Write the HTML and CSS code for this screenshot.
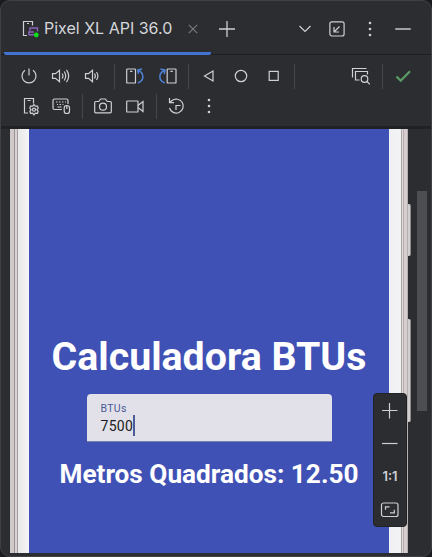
FILE: index.html
```html
<!DOCTYPE html>
<html lang="pt">
<head>
<meta charset="utf-8">
<title>Pixel XL API 36.0</title>
<link rel="stylesheet" href="styles.css">
</head>
<body>
<main class="window">
  <header class="tabs">
    <div class="tab">
      <svg class="device" viewBox="0 0 18 18"><path d="M5 15.5H1.500v-14h9v4"/><path d="M5 3.500h2"/><path class="purple" d="M8 11V8h7.500v3.500M6 12h6M7 12v2.800h5"/><circle class="online" cx="14.300" cy="15" r="2.400"/></svg>
      <span class="tab-title">Pixel XL API 36.0</span>
      <svg class="close" viewBox="0 0 10 10"><path d="M.8.8l8.400 8.400M9.200.8L.8 9.200"/></svg>
    </div>
    <svg class="add" viewBox="0 0 18 18"><path d="M9 1v16M1 9h16"/></svg>
    <div class="window-actions">
      <svg viewBox="0 0 20 20"><path d="M4.500 7l5.500 5.500L15.500 7"/></svg>
      <svg viewBox="0 0 20 20"><rect x="2.900" y="2.800" width="14.200" height="14.200" rx="2"/><path d="M12.500 7.500l-5 5M7 8v5h5"/></svg>
      <svg viewBox="0 0 20 20"><g class="dots"><circle cx="10" cy="4" r="1.300"/><circle cx="10" cy="10" r="1.300"/><circle cx="10" cy="16" r="1.300"/></g></svg>
      <svg viewBox="0 0 20 20"><path class="minimize" d="M2.200 10h15.600"/></svg>
    </div>
  </header>

  <section class="toolbar">
    <div class="tools">
      <svg viewBox="0 0 20 20"><path d="M10 2.500v7M6 4.200a7 7 0 1 0 8 0"/></svg>
      <svg viewBox="0 0 20 20"><path d="M1.500 7.700h3l4-3.400v11.400l-4-3.400h-3zM11 7.500q2 2.500 0 5M13.200 5.500q3 4.500 0 9M15.500 3.800q4.400 6.200 0 12.400"/></svg>
      <svg viewBox="0 0 20 20"><path d="M2.500 7.700h3l4-3.400v11.400l-4-3.400h-3zM11.500 7.500q1.700 2.500 0 5M13.500 6q2.800 4 0 8"/></svg>
      <i class="rule"></i>
      <svg viewBox="0 0 20 20"><rect x="1.700" y="3" width="8.800" height="14" rx=".6"/><path d="M5 5.300h2.400"/><path class="blue" d="M13 17c7-3 6-10 0-12.700M17 3l-4.300 1 .8 4"/></svg>
      <svg viewBox="0 0 20 20"><rect x="10.200" y="3" width="8.800" height="14" rx=".6"/><path d="M13.400 5.300h2.400"/><path class="blue" d="M7.700 17c-7-3-6-10 0-12.700M3.500 3L8 4l-.8 4"/></svg>
      <i class="rule"></i>
      <svg viewBox="0 0 20 20"><path d="M14 5v10l-8.500-5z"/></svg>
      <svg viewBox="0 0 20 20"><circle cx="10" cy="10" r="5.700"/></svg>
      <svg viewBox="0 0 20 20"><rect x="6.200" y="5.400" width="9" height="9"/></svg>
      <i class="rule"></i>
      <div class="tools-end">
        <svg viewBox="0 0 20 20"><path d="M1.500 11.500v-9h14M8.500 14H4.500V5.500h12V8.500"/><circle cx="13.500" cy="13" r="3.300"/><path d="M16 15.500l2.800 2.800"/></svg>
        <i class="rule"></i>
        <svg viewBox="0 0 20 20"><path class="check" d="M3.500 10.500l4.200 4.200L17 5.300"/></svg>
      </div>
    </div>
    <div class="tools">
      <svg viewBox="0 0 20 20"><path d="M9 17H5.500V2.500h9v5M8.500 4.500h3"/><path d="M15 8.500l1.300 1.700 2.200-.1.700 2-1.300 1.600 1.300 1.600-.7 2-2.200-.1-1.300 1.700-1.300-1.700-2.200.1-.7-2 1.300-1.600-1.300-1.600.7-2 2.200.1z"/><circle cx="15" cy="13.700" r="1.500"/></svg>
      <svg viewBox="0 0 20 20"><path d="M11 13.500H3.500q-1.500 0-1.500-1.500V4.500q0-1.500 1.500-1.500h12q1.500 0 1.500 1.500V8"/><path d="M5 6h1.500m1.500 0h1.500m1.500 0h1.500m1.500 0h1M6 8.500h1m1.500 0h1.500m1.500 0h1M6.500 11h4"/><rect x="13.200" y="9.500" width="5.300" height="8" rx="2.600"/><path d="M15.800 10v3"/></svg>
      <i class="rule"></i>
      <svg viewBox="0 0 20 20"><path d="M1.700 6.500q0-1 1-1h3l2-2.500h4.600l2 2.500h3q1 0 1 1v9.300q0 1-1 1H2.700q-1 0-1-1z"/><circle cx="10" cy="10.700" r="3.500"/></svg>
      <svg viewBox="0 0 20 20"><rect x="1.700" y="5" width="11.300" height="11" rx=".6"/><path d="M13 9.500l5-4v10l-5-4"/></svg>
      <i class="rule"></i>
      <svg viewBox="0 0 20 20"><path d="M2.500 12A7 7 0 1 0 5 4.500L2.500 6.500M2.500 2v4.700H7M9 14V9.500h4.500"/></svg>
      <svg viewBox="0 0 20 20"><g class="dots"><circle cx="10" cy="4" r="1.300"/><circle cx="10" cy="10" r="1.300"/><circle cx="10" cy="16" r="1.300"/></g></svg>
    </div>
  </section>

  <section class="viewport">
    <div class="edge-left"></div>
    <div class="screen">
      <h1>Calculadora BTUs</h1>
      <div class="field">
        <span class="label">BTUs</span>
        <span class="value">7500<i class="caret"></i></span>
      </div>
      <h2>Metros Quadrados: 12.50</h2>
    </div>
    <div class="edge-right"></div>
    <div class="side-buttons"><i class="power-key"></i><i class="volume-key"></i></div>
    <div class="scrollbar"></div>
    <aside class="zoom">
      <svg viewBox="0 0 20 20"><path d="M9.500 2v15.500M2 9.500h15.500"/></svg>
      <svg viewBox="0 0 20 20"><path d="M2 9.500h15.500"/></svg>
      <span>1:1</span>
      <svg viewBox="0 0 20 20"><rect x="1.500" y="3" width="16.500" height="13.500" rx="2"/><path d="M5.500 9.800V6.800H9.500M10 12.800h4.300V9.800"/></svg>
    </aside>
  </section>
</main>
</body>
</html>
```
FILE: styles.css
```css
* { box-sizing: border-box; }
body { margin: 0; background: #1b1c1f; font-family: Inter, "Liberation Sans", sans-serif; }
svg { display: block; flex: none; width: 20px; height: 20px; fill: none; stroke: #ced0d6; stroke-width: 1.2; }
.window {
  width: 432px;
  height: 557px;
  display: flex;
  flex-direction: column;
  overflow: hidden;
  background: #2b2d30;
  border: 1px solid #404144;
  border-radius: 10px;
}
.tabs {
  height: 54px;
  display: flex;
  align-items: center;
  padding-left: 3px;
  border-bottom: 1px solid #1e1f22;
}
.tab {
  width: 207px;
  height: 54px;
  display: flex;
  align-items: center;
  padding: 4px 0 0 17px;
  border-bottom: 3px solid #4272d2;
  border-radius: 0 0 2px 2px;
}
.device { width: 18px; height: 18px; margin: 1px 0 0 1px; }
.purple { stroke: #8c64b8; stroke-width: 1.4; }
.online { fill: #0be01b; stroke: none; }
.tab-title {
  width: 132px;
  margin-left: 4px;
  color: #d5d7dc;
  font-size: 16px;
  white-space: nowrap;
}
.close { width: 10px; height: 10px; margin: 2px 0 0 12px; stroke: #777a80; }
.add { width: 18px; height: 18px; margin: 2px 0 0 7px; stroke-width: 1.3; }
.window-actions { display: flex; gap: 12.8px; margin: 3px 18px 0 auto; }
.minimize { stroke: #9fa1a6; stroke-width: 1.8; }
.dots { fill: #ced0d6; stroke: none; }
.toolbar {
  height: 74px;
  flex: none;
  padding: 6px 12px 0;
  border-bottom: 3px solid #202125;
}
.tools { height: 30px; display: flex; align-items: center; }
.tools svg { margin: 0 6px; }
.rule { width: 1px; height: 25px; margin: 0 4px 0 5px; background: #45474b; }
.tools-end { display: flex; align-items: center; margin-left: auto; }
.blue { stroke: #4d82d8; stroke-width: 1.5; }
.check { stroke: #5b9a65; stroke-width: 2.3; }
.viewport {
  position: relative;
  height: 424px;
  flex: none;
  display: flex;
  padding-left: 9px;
}
.edge-left {
  width: 19px;
  background: linear-gradient(90deg, #cfc9ca 0 4px, #9d9293 4px 5px, #d8d2d3 5px 7px, #a89e9f 7px 8px, #e9e8e9 8px, #f5f5f6 19px);
}
.edge-right {
  width: 19px;
  background: linear-gradient(90deg, #f0f1f5 0, #f3f3f4 12px, #aaa3a4 12px 13px, #e0dadb 13px 14px, #b5adae 14px 15px, #d5cdce 15px 18px, #b5afb0 18px);
}
.screen {
  width: 360px;
  display: flex;
  flex-direction: column;
  align-items: center;
  padding-top: 204px;
  background: #3f51b5;
  color: #fff;
  font-family: Roboto, sans-serif;
}
h1, h2 { margin: 0; font-weight: 700; white-space: nowrap; }
h1 { font-size: 39.3px; line-height: 48px; }
.field {
  width: 245px;
  height: 48px;
  display: flex;
  flex-direction: column;
  margin-top: 13px;
  padding: 8px 14px 0;
  background: #e2e1e9;
  border-bottom: 1px solid #7780af;
  border-radius: 4px 4px 0 0;
}
.label { color: #4b5a97; font-size: 10.5px; line-height: 13px; letter-spacing: .3px; }
.value { display: flex; align-items: center; height: 21px; color: #1b1b20; font-size: 14px; letter-spacing: .3px; }
.caret { width: 2px; height: 21px; background: #4c5c96; }
h2 { margin-top: 17px; font-size: 26.2px; line-height: 30px; }
.side-buttons { width: 4px; padding-top: 75px; }
.side-buttons i { display: block; width: 3px; border-right: 1px solid #8f8b8c; background: #d2cfcf; border-radius: 0 2px 2px 0; }
.power-key { height: 52px; }
.volume-key { height: 103px; margin-top: 63px; }
.scrollbar { width: 10px; height: 220px; margin: 62px 0 0 5px; background: #4d4e51; }
.zoom {
  position: absolute;
  left: 372px;
  top: 264px;
  width: 34px;
  height: 134px;
  display: flex;
  flex-direction: column;
  align-items: center;
  gap: 13px;
  padding-top: 7px;
  background: #2b2d30;
  border: 1px solid #222327;
  border-radius: 4px;
}
.zoom span { height: 20px; color: #ced0d6; font-size: 13px; font-weight: 600; line-height: 18px; }
```
